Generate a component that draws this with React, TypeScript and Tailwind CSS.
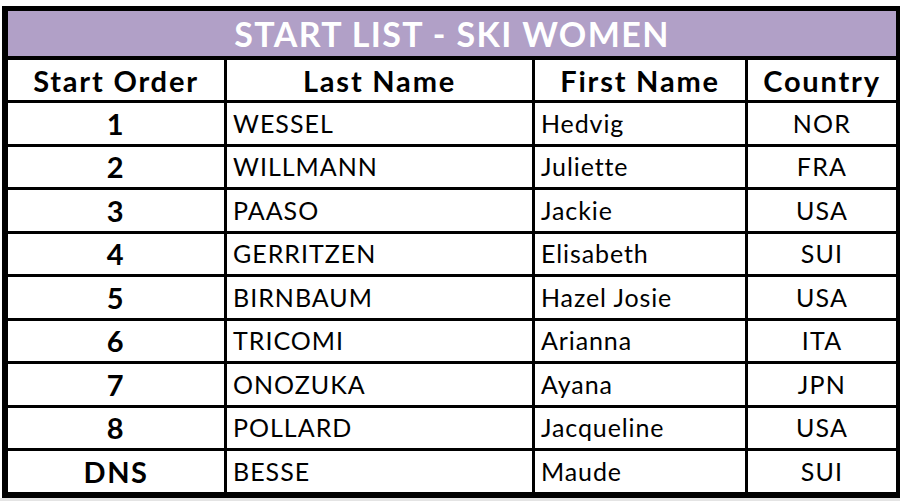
import React from "react";

type Entry = {
  order: string;
  last: string;
  first: string;
  country: string;
};

const entries: Entry[] = [
  { order: "1", last: "WESSEL", first: "Hedvig", country: "NOR" },
  { order: "2", last: "WILLMANN", first: "Juliette", country: "FRA" },
  { order: "3", last: "PAASO", first: "Jackie", country: "USA" },
  { order: "4", last: "GERRITZEN", first: "Elisabeth", country: "SUI" },
  { order: "5", last: "BIRNBAUM", first: "Hazel Josie", country: "USA" },
  { order: "6", last: "TRICOMI", first: "Arianna", country: "ITA" },
  { order: "7", last: "ONOZUKA", first: "Ayana", country: "JPN" },
  { order: "8", last: "POLLARD", first: "Jacqueline", country: "USA" },
  { order: "DNS", last: "BESSE", first: "Maude", country: "SUI" },
];

const cols = "grid grid-cols-[216px_305px_210px_1fr] gap-x-[3px]";

export default function App() {
  return (
    <div className="w-[900px] h-[501px] bg-[#e4e4e4] overflow-hidden font-['Lato',sans-serif] text-black">
      <div className="bg-white pl-[2px] pt-[6px]">
        <div className="w-[898px] bg-black border-l-[6px] border-r-[4px] border-t-[5px] border-b-[6px] border-black flex flex-col">
          {/* Title */}
          <div className="h-[45px] bg-[#b1a0c7] flex items-center justify-center text-white font-bold text-[34px] tracking-[1.4px] leading-none">
            START LIST - SKI WOMEN
          </div>

          {/* Header */}
          <div className={`${cols} mt-[4px] h-[40px]`}>
            {["Start Order", "Last Name", "First Name", "Country"].map((h) => (
              <div
                key={h}
                className="bg-white flex items-center justify-center font-bold text-[29px] tracking-[1.8px] leading-none"
              >
                {h}
              </div>
            ))}
          </div>

          {/* Rows */}
          <div className="flex flex-col gap-y-[3px] mt-[3px]">
            {entries.map((e) => (
              <div key={e.order} className={`${cols} h-[40.5px]`}>
                <div className="bg-white flex items-center justify-center font-bold text-[29px] tracking-[1.5px] leading-none">
                  {e.order}
                </div>
                <div className="bg-white flex items-center pl-[6px] text-[25px] tracking-[1px] leading-none">
                  {e.last}
                </div>
                <div className="bg-white flex items-center pl-[6px] text-[25px] tracking-[0.9px] leading-none">
                  {e.first}
                </div>
                <div className="bg-white flex items-center justify-center text-[25px] tracking-[1.2px] leading-none">
                  {e.country}
                </div>
              </div>
            ))}
          </div>
        </div>
      </div>
    </div>
  );
}
